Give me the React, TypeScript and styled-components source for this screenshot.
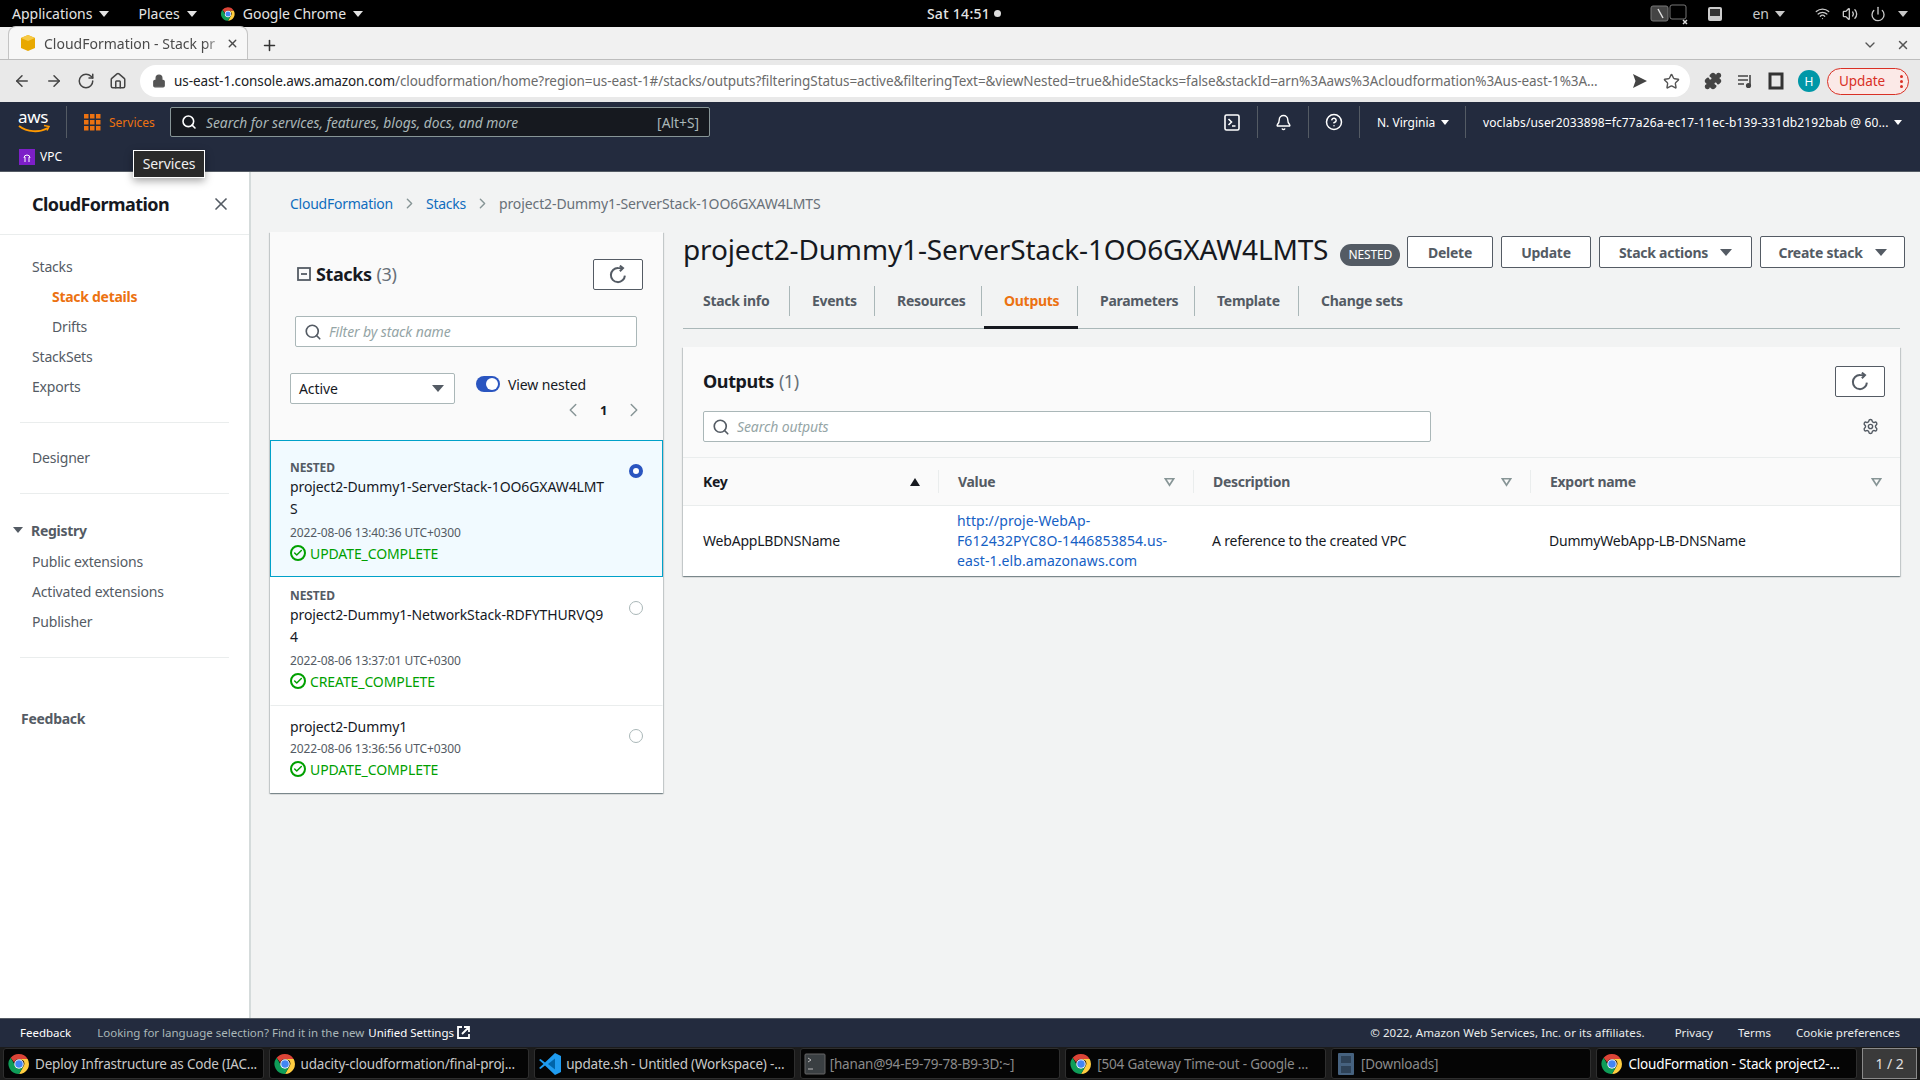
import React, { FC } from 'react';
import styled, { createGlobalStyle } from 'styled-components';
import {
  ArrowLeft,
  ArrowRight,
  RotateCw,
  Home,
  Lock,
  Star,
  Puzzle,
  Plus,
  X,
  ChevronDown,
  ChevronLeft,
  ChevronRight,
  Search,
  Bell,
  CircleHelp,
  Settings,
  Wifi,
  Volume2,
  Power,
  Check,
} from 'lucide-react';

const FONT = `"Noto Sans", "Open Sans", sans-serif`;

const GlobalStyle = createGlobalStyle`
  html, body { margin: 0; padding: 0; background: #f2f3f3; }
  body { font-family: ${FONT}; font-size: 14px; color: #16191f; letter-spacing: -0.1px; }
  * { box-sizing: border-box; }
`;

const Page = styled.div`
  width: 1920px;
  height: 1080px;
  display: flex;
  flex-direction: column;
  overflow: hidden;
  position: relative;
`;

/* gnome top bar */
const SystemBar = styled.div`
  height: 27px;
  background: #000;
  color: #e4e4e4;
  display: grid;
  grid-template-columns: 1fr auto 1fr;
  align-items: center;
  font-size: 14px;
  letter-spacing: 0;
  padding: 0 12px;
`;
const SystemLeft = styled.div`
  display: flex;
  align-items: center;
`;
const SystemRight = styled.div`
  display: flex;
  align-items: center;
  justify-content: flex-end;
  color: #c8c8c8;
`;
const SystemMenu = styled.span<{ $gap: number }>`
  display: flex;
  align-items: center;
  gap: 7px;
  margin-right: ${(p) => p.$gap}px;
`;
const Caret = styled.i<{ $size?: number; $color?: string }>`
  display: inline-block;
  width: 0;
  height: 0;
  flex-shrink: 0;
  border-left: ${(p) => p.$size ?? 5}px solid transparent;
  border-right: ${(p) => p.$size ?? 5}px solid transparent;
  border-top: ${(p) => (p.$size ?? 5) + 1}px solid ${(p) => p.$color ?? 'currentColor'};
`;
const Clock = styled.div`
  display: flex;
  align-items: center;
  gap: 4px;
  font-weight: 500;
  letter-spacing: 0.3px;
  margin-left: 8px;
`;
const ClockDot = styled.i`
  width: 7px;
  height: 7px;
  border-radius: 50%;
  background: #ddd;
`;
const TraySlot = styled.span<{ $ml?: number; $gap?: number }>`
  display: flex;
  align-items: center;
  gap: ${(p) => p.$gap ?? 6}px;
  margin-left: ${(p) => p.$ml ?? 0}px;
`;

/* chrome tabs */
const TabStrip = styled.div`
  height: 33px;
  background: #f1f1f1;
  border-bottom: 1px solid #bdbdbd;
  display: flex;
  align-items: flex-end;
  padding-left: 8px;
  color: #444;
`;
const BrowserTab = styled.div`
  width: 240px;
  height: 33px;
  background: #f7f7f7;
  border: 1px solid #c4c4c4;
  border-bottom: 0;
  border-radius: 8px 8px 0 0;
  display: flex;
  align-items: center;
  padding: 0 8px 0 11px;
  font-size: 14px;
  letter-spacing: 0;
  color: #4a4a4a;
`;
const BrowserTabTitle = styled.span`
  flex: 1;
  margin-left: 8px;
  white-space: nowrap;
  -webkit-mask-image: linear-gradient(90deg, #000 88%, transparent);
`;
const NewTab = styled.span`
  display: flex;
  margin: 0 0 5px 13px;
  color: #333;
`;
const TabStripEnd = styled.div`
  margin-left: auto;
  display: flex;
  align-items: center;
  gap: 18px;
  padding: 0 10px 6px 0;
  color: #555;
`;

/* address bar */
const AddressBar = styled.div`
  height: 42px;
  background: #e9e9e9;
  display: flex;
  align-items: center;
  padding-left: 13px;
  color: #444;
`;
const NavIcons = styled.div`
  display: flex;
  gap: 14px;
  width: 127px;
`;
const Omnibox = styled.div`
  width: 1550px;
  height: 32px;
  background: #fff;
  border-radius: 16px;
  display: flex;
  align-items: center;
  padding: 0 10px 0 12px;
  color: #555;
`;
const UrlText = styled.div`
  flex: 1;
  margin-left: 8px;
  font-size: 13.5px;
  letter-spacing: -0.08px;
  color: #6b6b6b;
  white-space: nowrap;
  b {
    font-weight: 400;
    color: #202124;
  }
`;
const OmniEnd = styled.div`
  display: flex;
  align-items: center;
  gap: 15px;
`;
const BrowserTools = styled.div`
  display: flex;
  align-items: center;
  margin-left: 14px;
  gap: 14px;
`;
const Avatar = styled.span`
  width: 22px;
  height: 22px;
  border-radius: 50%;
  background: #0097a7;
  color: #fff;
  font-size: 12px;
  display: flex;
  align-items: center;
  justify-content: center;
`;
const UpdatePill = styled.span`
  width: 82px;
  height: 27px;
  margin-left: 7px;
  border: 1px solid #d93025;
  border-radius: 14px;
  background: #fbe9e7;
  color: #d93025;
  font-size: 13.5px;
  display: flex;
  align-items: center;
  justify-content: space-between;
  padding: 0 5px 0 11px;
`;
const Dots = styled.span`
  display: flex;
  flex-direction: column;
  gap: 2px;
  i {
    width: 3px;
    height: 3px;
    border-radius: 50%;
    background: #d93025;
  }
`;

/* aws header */
const ConsoleHeader = styled.header`
  height: 70px;
  background: #232b3e;
  color: #fff;
  border-bottom: 1px solid #545b64;
  font-size: 12px;
  letter-spacing: 0;
`;
const HeaderRow = styled.div`
  height: 40px;
  display: flex;
  align-items: center;
  padding-left: 18px;
`;
const LogoBox = styled.div`
  width: 33px;
  height: 26px;
  position: relative;
  font-size: 17px;
  line-height: 15px;
  letter-spacing: -0.3px;
  color: #fff;
  svg {
    position: absolute;
    left: 0;
    top: 15px;
  }
`;
const HeaderSep = styled.span<{ $h?: number; $ml?: number; $mr?: number }>`
  width: 1px;
  height: ${(p) => p.$h ?? 22}px;
  background: #545b64;
  margin-left: ${(p) => p.$ml ?? 0}px;
  margin-right: ${(p) => p.$mr ?? 0}px;
`;
const ServicesLink = styled.span`
  display: flex;
  align-items: center;
  gap: 8px;
  color: #ec7211;
  width: 86px;
`;
const HeaderSearch = styled.div`
  width: 540px;
  height: 30px;
  background: #16191f;
  border: 1px solid #879596;
  border-radius: 2px;
  display: flex;
  align-items: center;
  padding: 0 10px;
  gap: 9px;
  color: #aab7b8;
  font-size: 13.8px;
  em {
    flex: 1;
  }
`;
const HeaderRight = styled.div`
  margin-left: auto;
  display: flex;
  align-items: center;
  padding-right: 17px;
`;
const HeaderIcon = styled.span`
  width: 50px;
  display: flex;
  justify-content: center;
`;
const HeaderMenu = styled.span<{ $w: number; $between?: boolean }>`
  display: flex;
  align-items: center;
  justify-content: ${(p) => (p.$between ? 'space-between' : 'flex-start')};
  gap: 6px;
  width: ${(p) => p.$w}px;
  padding: 0 2px 0 17px;
  white-space: nowrap;
  letter-spacing: ${(p) => (p.$between ? 0.12 : 0)}px;
`;
const FavRow = styled.div`
  height: 29px;
  display: flex;
  align-items: center;
  padding-left: 19px;
  gap: 5px;
  font-size: 12px;
`;
const VpcIcon = styled.span`
  width: 16px;
  height: 16px;
  background: #7d1fc8;
  display: flex;
  align-items: center;
  justify-content: center;
`;
const Tooltip = styled.div`
  position: absolute;
  left: 133px;
  top: 150px;
  width: 72px;
  height: 28px;
  background: #2a2a2a;
  color: #f0f0f0;
  border: 1px solid #fff;
  font-size: 14px;
  line-height: 26px;
  text-align: center;
  box-shadow: 0 3px 8px rgba(0, 0, 0, 0.35);
  z-index: 4;
`;

/* body */
const Body = styled.div`
  flex: 1;
  display: flex;
  min-height: 0;
`;
const Sidebar = styled.aside`
  width: 251px;
  background: #fff;
  border-right: 2px solid #d5dbdb;
  flex-shrink: 0;
`;
const SidebarHead = styled.div`
  height: 63px;
  border-bottom: 1px solid #eaeded;
  display: flex;
  align-items: center;
  justify-content: space-between;
  padding: 2px 18px 0 32px;
  font-size: 18px;
  font-weight: 700;
  letter-spacing: -0.55px;
`;
const SideList = styled.div<{ $top?: number }>`
  padding-top: ${(p) => p.$top ?? 0}px;
`;
const SideItem = styled.div<{ $indent?: boolean; $active?: boolean }>`
  height: 30px;
  line-height: 30px;
  padding-left: ${(p) => (p.$indent ? 52 : 32)}px;
  font-size: 14px;
  letter-spacing: ${(p) => (p.$active ? -0.28 : -0.18)}px;
  color: ${(p) => (p.$active ? '#ec7211' : '#545b64')};
  font-weight: ${(p) => (p.$active ? 700 : 400)};
`;
const SideDivider = styled.div`
  height: 1px;
  background: #eaeded;
  margin: 20px 20px;
`;
const SideGroup = styled.div`
  display: flex;
  align-items: center;
  height: 30px;
  margin: 21px 0 2px;
  padding-left: 13px;
  gap: 8px;
  color: #545b64;
  font-weight: 700;
  font-size: 14px;
  letter-spacing: -0.28px;
`;
const SideFeedback = styled.div`
  margin: 46px 0 0 21px;
  height: 30px;
  line-height: 30px;
  font-weight: 700;
  letter-spacing: -0.28px;
  color: #545b64;
`;

const Main = styled.main`
  flex: 1;
  padding: 0 20px 0 19px;
  min-width: 0;
`;
const Crumbs = styled.nav`
  height: 60px;
  display: flex;
  align-items: center;
  padding: 2px 0 0 20px;
  gap: 8px;
  font-size: 14px;
  color: #687078;
`;
const CrumbLink = styled.a`
  color: #0f6dbe;
  letter-spacing: -0.25px;
`;
const Columns = styled.div`
  display: flex;
  gap: 20px;
  align-items: flex-start;
`;

const Card = styled.section`
  background: #fafafa;
  box-shadow: 0 1px 1px 0 rgba(0, 28, 36, 0.3), 1px 1px 1px 0 rgba(0, 28, 36, 0.15),
    -1px 1px 1px 0 rgba(0, 28, 36, 0.15);
`;
const StacksCard = styled(Card)`
  width: 393px;
  flex-shrink: 0;
`;
const StacksHead = styled.div`
  padding: 27px 20px 0 27px;
  display: flex;
  align-items: center;
  justify-content: space-between;
`;
const PanelTitle = styled.h2`
  margin: -2px 0 0;
  font-size: 18px;
  font-weight: 700;
  letter-spacing: -0.4px;
  display: flex;
  align-items: center;
  gap: 5px;
  span {
    font-weight: 400;
    color: #687078;
  }
`;
const IconButton = styled.button`
  width: 50px;
  height: 31px;
  background: #fff;
  border: 1px solid #545b64;
  border-radius: 2px;
  padding: 0;
  display: flex;
  align-items: center;
  justify-content: center;
  color: #545b64;
`;
const InputBox = styled.div<{ $w: number; $ml: number }>`
  width: ${(p) => p.$w}px;
  height: 31px;
  margin-left: ${(p) => p.$ml}px;
  background: #fff;
  border: 1px solid #aab7b8;
  border-radius: 2px;
  display: flex;
  align-items: center;
  padding: 0 8px 0 8px;
  gap: 7px;
  font-size: 14px;
  font-style: italic;
  color: #95a5a6;
  svg {
    color: #545b64;
  }
`;
const FilterSlot = styled.div`
  margin-top: 26px;
`;
const ControlRow = styled.div`
  display: flex;
  padding: 26px 0 18px 20px;
`;
const SelectBox = styled.div`
  width: 165px;
  height: 31px;
  background: #fff;
  border: 1px solid #aab7b8;
  border-radius: 2px;
  display: flex;
  align-items: center;
  justify-content: space-between;
  padding: 0 10px 0 8px;
  font-size: 14px;
  color: #16191f;
`;
const ToggleCol = styled.div`
  margin-left: 21px;
  flex: 1;
`;
const ToggleRow = styled.div`
  height: 22px;
  display: flex;
  align-items: center;
  gap: 8px;
  font-size: 14px;
  color: #16191f;
`;
const Toggle = styled.span`
  width: 24px;
  height: 16px;
  background: #2a55c0;
  border-radius: 8px;
  display: flex;
  align-items: center;
  justify-content: flex-end;
  padding-right: 2px;
  i {
    width: 12px;
    height: 12px;
    border-radius: 50%;
    background: #fff;
  }
`;
const Pager = styled.div`
  height: 24px;
  margin-top: 3px;
  display: flex;
  align-items: center;
  padding-left: 86px;
  font-size: 13px;
  font-weight: 700;
  gap: 16px;
  svg {
    color: #879596;
  }
`;
const StackItem = styled.div<{ $selected?: boolean; $top: number; $bottom: number }>`
  display: flex;
  justify-content: space-between;
  background: ${(p) => (p.$selected ? '#f1faff' : '#fff')};
  border: 1px solid ${(p) => (p.$selected ? '#00a1c9' : 'transparent')};
  border-bottom-color: ${(p) => (p.$selected ? '#00a1c9' : '#eaeded')};
  padding: ${(p) => p.$top}px 19px ${(p) => p.$bottom}px 19px;
  &:last-child {
    border-bottom-color: transparent;
  }
`;
const StackBody = styled.div`
  width: 320px;
`;
const NestedTag = styled.div`
  font-size: 12px;
  line-height: 16px;
  font-weight: 700;
  color: #545b64;
`;
const StackName = styled.div`
  font-size: 14px;
  line-height: 22px;
  color: #16191f;
  word-break: break-all;
`;
const StackDate = styled.div<{ $tight?: boolean }>`
  font-size: 12px;
  line-height: 20px;
  margin-top: ${(p) => (p.$tight ? 1 : 3)}px;
  color: #545b64;
`;
const StackStatus = styled.div`
  display: flex;
  align-items: center;
  gap: 4px;
  height: 20px;
  color: #00a000;
  font-size: 14px;
`;
const StatusIcon = styled.span`
  width: 16px;
  height: 16px;
  border: 2px solid #00a000;
  border-radius: 50%;
  display: flex;
  align-items: center;
  justify-content: center;
`;
const Radio = styled.span<{ $on?: boolean; $top: number }>`
  width: 14px;
  height: 14px;
  margin-top: ${(p) => p.$top}px;
  border-radius: 50%;
  background: #fff;
  border: ${(p) => (p.$on ? '4px solid #2a55c0' : '1px solid #aab7b8')};
  flex-shrink: 0;
`;

const DetailCol = styled.div`
  flex: 1;
  min-width: 0;
`;
const TitleRow = styled.div`
  height: 54px;
  display: flex;
  align-items: flex-start;
  margin-right: -5px;
`;
const StackTitle = styled.h1`
  margin: 0;
  font-size: 28px;
  line-height: 34px;
  font-weight: 400;
  letter-spacing: -0.15px;
  white-space: nowrap;
`;
const Badge = styled.span`
  width: 60px;
  height: 22px;
  margin: 12px 0 0 12px;
  background: #545b64;
  color: #fff;
  border-radius: 11px;
  font-size: 12px;
  line-height: 22px;
  text-align: center;
`;
const Actions = styled.div`
  margin: 4px 0 0 auto;
  display: flex;
  gap: 8px;
`;
const ActionButton = styled.button<{ $w: number }>`
  width: ${(p) => p.$w}px;
  height: 32px;
  background: #fff;
  border: 1px solid #545b64;
  border-radius: 2px;
  color: #545b64;
  font: 700 14px ${FONT};
  letter-spacing: -0.25px;
  display: flex;
  align-items: center;
  justify-content: center;
  gap: 12px;
  padding: 0;
`;
const Tabs = styled.div`
  height: 43px;
  border-bottom: 1px solid #aab7b8;
  display: flex;
  align-items: flex-start;
`;
const TabItem = styled.div<{ $w: number; $active?: boolean; $last?: boolean }>`
  width: ${(p) => p.$w}px;
  height: 30px;
  line-height: 30px;
  padding-left: 22px;
  white-space: nowrap;
  font-size: 14px;
  font-weight: 700;
  letter-spacing: -0.28px;
  color: ${(p) => (p.$active ? '#ec7211' : '#545b64')};
  border-right: ${(p) => (p.$last ? '0' : '1px solid #aab7b8')};
  position: relative;
  &:first-child {
    padding-left: 20px;
  }
  &::after {
    content: '';
    display: ${(p) => (p.$active ? 'block' : 'none')};
    position: absolute;
    left: 2px;
    right: -1px;
    top: 40px;
    height: 3px;
    background: #16191f;
  }
`;
const OutputsCard = styled(Card)`
  margin-top: 18px;
`;
const OutputsHead = styled.div`
  padding: 19px 15px 0 20px;
  display: flex;
  align-items: center;
  justify-content: space-between;
`;
const SearchRow = styled.div`
  display: flex;
  align-items: center;
  justify-content: space-between;
  margin-top: 14px;
  padding: 0 21px 15px 0;
  border-bottom: 1px solid #eaeded;
  color: #545b64;
`;
const OutputsGrid = styled.div`
  display: grid;
  grid-template-columns: 255px 255px 337px 370px;
`;
const HeadCell = styled.div<{ $first?: boolean }>`
  height: 48px;
  border-bottom: 1px solid #eaeded;
  display: flex;
  align-items: center;
  justify-content: space-between;
  padding: 0 18px 0 20px;
  font-weight: 700;
  font-size: 14px;
  letter-spacing: -0.3px;
  color: ${(p) => (p.$first ? '#16191f' : '#545b64')};
  position: relative;
  &::before {
    content: '';
    display: ${(p) => (p.$first ? 'none' : 'block')};
    position: absolute;
    left: 0;
    top: 12px;
    bottom: 12px;
    width: 1px;
    background: #eaeded;
  }
`;
const DataCell = styled.div<{ $pl: number }>`
  height: 70px;
  background: #fff;
  display: flex;
  align-items: center;
  padding-left: ${(p) => p.$pl}px;
  padding-right: 18px;
  font-size: 14px;
  line-height: 20px;
  letter-spacing: -0.2px;
  color: #16191f;
`;
const TableLink = styled.a`
  color: #1560c4;
  letter-spacing: 0.1px;
`;
const SortUp = styled.i`
  width: 0;
  height: 0;
  border-left: 5px solid transparent;
  border-right: 5px solid transparent;
  border-bottom: 8px solid #16191f;
`;

/* footer + window list */
const ConsoleFooter = styled.footer`
  height: 29px;
  background: #232b3e;
  border-top: 1px solid #545b64;
  color: #fff;
  font-size: 11.5px;
  letter-spacing: 0;
  display: flex;
  align-items: center;
  padding: 0 20px 2px;
`;
const FooterHint = styled.span`
  margin-left: 26px;
  color: #aab7b8;
  display: flex;
  align-items: center;
  b {
    font-weight: 400;
    color: #fff;
    margin-left: 4px;
  }
  svg {
    margin-left: 2px;
  }
`;
const FooterEnd = styled.div`
  margin-left: auto;
  display: flex;
  gap: 25px;
  color: #eaeded;
`;
const Copyright = styled.span`
  margin-right: 5px;
  letter-spacing: 0.07px;
`;
const WindowList = styled.div`
  height: 33px;
  background: #1c1c1c;
  display: flex;
  align-items: center;
  padding: 0 3px;
  gap: 5px;
`;
const WindowButton = styled.div<{ $active?: boolean; $dim?: boolean }>`
  flex: 1;
  min-width: 0;
  height: 31px;
  background: #050505;
  border-radius: 3px;
  box-shadow: inset 0 0 0 1px #2e2e2e;
  display: flex;
  align-items: center;
  gap: 4px;
  padding: 0 4px;
  font-size: 13.5px;
  letter-spacing: -0.2px;
  white-space: nowrap;
  color: ${(p) => (p.$active ? '#fff' : p.$dim ? '#8a8a8a' : '#c8c8c8')};
`;
const WorkspacePager = styled.div`
  width: 55px;
  height: 31px;
  background: #3a3a3a;
  border: 1px solid #8a8a8a;
  color: #e0e0e0;
  font-size: 14px;
  display: flex;
  align-items: center;
  justify-content: center;
  flex-shrink: 0;
`;

const ChromeLogo: FC<{ size?: number }> = ({ size = 24 }) => (
  <svg width={size} height={size} viewBox="0 0 48 48" style={{ flexShrink: 0 }}>
    <path fill="#db4437" d="M24 4a20 20 0 0 1 17.3 10H24a10 10 0 0 0-9.6 7.2L7.3 11.6A20 20 0 0 1 24 4z" />
    <path fill="#ffcd40" d="M41.3 14A20 20 0 0 1 24 44l8.7-15A10 10 0 0 0 32 16.5l-8-2.5z" />
    <path fill="#0f9d58" d="M7.3 11.6l8.6 14.9A10 10 0 0 0 32.7 29L24 44A20 20 0 0 1 7.3 11.6z" />
    <circle cx="24" cy="24" r="9.5" fill="#fff" />
    <circle cx="24" cy="24" r="7.5" fill="#4285f4" />
  </svg>
);

const VsCodeLogo = () => (
  <svg width="24" height="24" viewBox="0 0 24 24" style={{ flexShrink: 0 }}>
    <path fill="#1f9cf0" d="M17 1l6 3v16l-6 3-10-9.5L2.5 17 1 16l4.5-4L1 8l1.5-1L7 10.500z" />
    <path fill="#0065a9" d="M17 6.500L10 12l7 5.500z" />
  </svg>
);

const RefreshIcon = () => (
  <svg width="20" height="20" viewBox="0 0 16 16" fill="none" stroke="currentColor" strokeWidth="1.600">
    <path d="M13.500 8.500A5.600 5.600 0 1 1 8 2.500h4" />
    <path d="M9.500 0.500L12 2.500 9.500 5" />
  </svg>
);

const TerminalIcon = () => (
  <svg width="16" height="17" viewBox="0 0 16 17" fill="none" stroke="#fff" strokeWidth="1.600">
    <rect x="1" y="1" width="14" height="15" rx="1.500" />
    <path d="M4.500 5l3 3-3 3M8 12h3.500" />
  </svg>
);

const FilterDown = () => (
  <svg width="11" height="10" viewBox="0 0 12 10" fill="none" stroke="#879596" strokeWidth="1.800">
    <path d="M1.500 1.500h9L6 8.500z" />
  </svg>
);

const StatusLine: FC<{ text: string }> = ({ text }) => (
  <StackStatus>
    <StatusIcon>
      <Check size={10} strokeWidth={3.5} />
    </StatusIcon>
    {text}
  </StackStatus>
);

const tabs = [
  { label: 'Stack info', w: 107 },
  { label: 'Events', w: 85 },
  { label: 'Resources', w: 107 },
  { label: 'Outputs', w: 96, active: true },
  { label: 'Parameters', w: 117 },
  { label: 'Template', w: 104 },
  { label: 'Change sets', w: 130, last: true },
];

const App: FC = () => (
  <Page>
    <GlobalStyle />
    <SystemBar>
      <SystemLeft>
        <SystemMenu $gap={29}>Applications <Caret /></SystemMenu>
        <SystemMenu $gap={23}>Places <Caret /></SystemMenu>
        <SystemMenu $gap={0}><ChromeLogo size={16} /> Google Chrome <Caret /></SystemMenu>
      </SystemLeft>
      <Clock>Sat 14:51 <ClockDot /></Clock>
      <SystemRight>
        <svg width="40" height="22" viewBox="0 0 40 22" fill="none" stroke="#777">
          <rect x="1" y="3" width="17" height="15" rx="2" fill="#444" />
          <rect x="20" y="2" width="16" height="14" rx="2" />
          <path d="M8 6l5 9M33 17l4 4M37 17l-4 4" stroke="#ddd" strokeWidth="1.500" />
        </svg>
        <TraySlot $ml={17}>
          <svg width="16" height="16" viewBox="0 0 16 16"><rect x="1" y="1" width="14" height="14" rx="2" fill="#ccc" /><rect x="3" y="3" width="10" height="7" fill="#333" /></svg>
        </TraySlot>
        <TraySlot $ml={29}>en <Caret /></TraySlot>
        <TraySlot $ml={30} $gap={12}>
          <Wifi size={15} />
          <Volume2 size={16} />
          <Power size={16} />
          <Caret />
        </TraySlot>
      </SystemRight>
    </SystemBar>

    <TabStrip>
      <BrowserTab>
        <svg width="16" height="18" viewBox="0 0 16 18">
          <path fill="#e8a800" d="M8 1l7 3v10l-7 3-7-3V4z" />
          <path fill="#f6c945" d="M8 1l7 3-7 3-7-3z" />
        </svg>
        <BrowserTabTitle>CloudFormation - Stack pr</BrowserTabTitle>
        <X size={13} strokeWidth={2.5} />
      </BrowserTab>
      <NewTab><Plus size={17} strokeWidth={2.2} /></NewTab>
      <TabStripEnd>
        <ChevronDown size={16} />
        <X size={14} strokeWidth={2.5} />
      </TabStripEnd>
    </TabStrip>

    <AddressBar>
      <NavIcons>
        <ArrowLeft size={18} />
        <ArrowRight size={18} />
        <RotateCw size={18} />
        <Home size={18} />
      </NavIcons>
      <Omnibox>
        <Lock size={14} fill="#555" />
        <UrlText>
          <b>us-east-1.console.aws.amazon.com</b>/cloudformation/home?region=us-east-1#/stacks/outputs?filteringStatus=active&filteringText=&viewNested=true&hideStacks=false&stackId=arn%3Aaws%3Acloudformation%3Aus-east-1%3A...
        </UrlText>
        <OmniEnd>
          <svg width="16" height="16" viewBox="0 0 16 16"><path fill="#444" d="M1 1l14 7-14 7 2.500-7z" /></svg>
          <Star size={17} />
        </OmniEnd>
      </Omnibox>
      <BrowserTools>
        <Puzzle size={18} fill="#444" />
        <svg width="18" height="18" viewBox="0 0 18 18" fill="none" stroke="#444" strokeWidth="1.600"><path d="M2 4h10M2 8h10M2 12h6" /><path d="M14 3v10" /><circle cx="12.500" cy="13.500" r="1.800" fill="#444" /></svg>
        <svg width="16" height="18" viewBox="0 0 16 18" fill="none" stroke="#333" strokeWidth="3"><rect x="2" y="2" width="12" height="14" /></svg>
        <Avatar>H</Avatar>
      </BrowserTools>
      <UpdatePill>
        Update
        <Dots><i /><i /><i /></Dots>
      </UpdatePill>
    </AddressBar>

    <ConsoleHeader>
      <HeaderRow>
        <LogoBox>
          aws
          <svg width="33" height="10" viewBox="0 0 33 10" fill="none" stroke="#ff9900" strokeWidth="2">
            <path d="M1 2c8 6 20 7 29 2" />
            <path d="M26 1.500l5 1-2 4" strokeWidth="1.500" />
          </svg>
        </LogoBox>
        <HeaderSep $h={32} $ml={15} $mr={17} />
        <ServicesLink>
          <svg width="17" height="17" viewBox="0 0 17 17" fill="#ec7211">
            {[0, 6, 12].map((x) =>
              [0, 6, 12].map((y) => <rect key={`${x}-${y}`} x={x} y={y} width="4.500" height="4.500" />)
            )}
          </svg>
          Services
        </ServicesLink>
        <HeaderSearch>
          <Search size={16} color="#fff" strokeWidth={2.4} />
          <em>Search for services, features, blogs, docs, and more</em>
          <span>[Alt+S]</span>
        </HeaderSearch>
        <HeaderRight>
          <HeaderIcon><TerminalIcon /></HeaderIcon>
          <HeaderSep $h={32} />
          <HeaderIcon><Bell size={17} strokeWidth={2} /></HeaderIcon>
          <HeaderSep $h={32} />
          <HeaderIcon><CircleHelp size={18} strokeWidth={2} /></HeaderIcon>
          <HeaderSep $h={32} />
          <HeaderMenu $w={105}>N. Virginia <Caret $size={4} /></HeaderMenu>
          <HeaderSep $h={32} />
          <HeaderMenu $w={437} $between>voclabs/user2033898=fc77a26a-ec17-11ec-b139-331db2192bab @ 60... <Caret $size={4} /></HeaderMenu>
        </HeaderRight>
      </HeaderRow>
      <FavRow>
        <VpcIcon>
          <svg width="10" height="12" viewBox="0 0 10 12" fill="none" stroke="#fff"><path d="M2 7a3 3 0 1 1 6 0M3 6v5M7 6v5" /></svg>
        </VpcIcon>
        VPC
      </FavRow>
    </ConsoleHeader>
    <Tooltip>Services</Tooltip>

    <Body>
      <Sidebar>
        <SidebarHead>
          CloudFormation
          <X size={20} color="#545b64" />
        </SidebarHead>
        <SideList $top={17}>
          <SideItem>Stacks</SideItem>
          <SideItem $indent $active>Stack details</SideItem>
          <SideItem $indent>Drifts</SideItem>
          <SideItem>StackSets</SideItem>
          <SideItem>Exports</SideItem>
        </SideList>
        <SideDivider />
        <SideItem>Designer</SideItem>
        <SideDivider />
        <SideGroup><Caret $size={5} $color="#545b64" /> Registry</SideGroup>
        <SideItem>Public extensions</SideItem>
        <SideItem>Activated extensions</SideItem>
        <SideItem>Publisher</SideItem>
        <SideDivider />
        <SideFeedback>Feedback</SideFeedback>
      </Sidebar>

      <Main>
        <Crumbs>
          <CrumbLink>CloudFormation</CrumbLink>
          <ChevronRight size={17} color="#879596" />
          <CrumbLink>Stacks</CrumbLink>
          <ChevronRight size={17} color="#879596" />
          project2-Dummy1-ServerStack-1OO6GXAW4LMTS
        </Crumbs>
        <Columns>
          <StacksCard>
            <StacksHead>
              <PanelTitle>
                <svg width="14" height="14" viewBox="0 0 14 14" fill="none" stroke="#545b64" strokeWidth="1.800"><rect x="1" y="1" width="12" height="12" /><path d="M4 7h6" /></svg>
                Stacks <span>(3)</span>
              </PanelTitle>
              <IconButton><RefreshIcon /></IconButton>
            </StacksHead>
            <FilterSlot>
              <InputBox $w={342} $ml={25}>
                <Search size={18} strokeWidth={2.2} />
                Filter by stack name
              </InputBox>
            </FilterSlot>
            <ControlRow>
              <SelectBox>
                Active
                <Caret $size={6} $color="#545b64" />
              </SelectBox>
              <ToggleCol>
                <ToggleRow><Toggle><i /></Toggle> View nested</ToggleRow>
                <Pager>
                  <ChevronLeft size={22} strokeWidth={1.6} />
                  1
                  <ChevronRight size={22} strokeWidth={1.6} />
                </Pager>
              </ToggleCol>
            </ControlRow>
            <StackItem $selected $top={19} $bottom={13}>
              <StackBody>
                <NestedTag>NESTED</NestedTag>
                <StackName>project2-Dummy1-ServerStack-1OO6GXAW4LMTS</StackName>
                <StackDate>2022-08-06 13:40:36 UTC+0300</StackDate>
                <StatusLine text="UPDATE_COMPLETE" />
              </StackBody>
              <Radio $on $top={4} />
            </StackItem>
            <StackItem $top={10} $bottom={14}>
              <StackBody>
                <NestedTag>NESTED</NestedTag>
                <StackName>project2-Dummy1-NetworkStack-RDFYTHURVQ94</StackName>
                <StackDate>2022-08-06 13:37:01 UTC+0300</StackDate>
                <StatusLine text="CREATE_COMPLETE" />
              </StackBody>
              <Radio $top={13} />
            </StackItem>
            <StackItem $top={9} $bottom={13}>
              <StackBody>
                <StackName>project2-Dummy1</StackName>
                <StackDate $tight>2022-08-06 13:36:56 UTC+0300</StackDate>
                <StatusLine text="UPDATE_COMPLETE" />
              </StackBody>
              <Radio $top={13} />
            </StackItem>
          </StacksCard>

          <DetailCol>
            <TitleRow>
              <StackTitle>project2-Dummy1-ServerStack-1OO6GXAW4LMTS</StackTitle>
              <Badge>NESTED</Badge>
              <Actions>
                <ActionButton $w={86}>Delete</ActionButton>
                <ActionButton $w={90}>Update</ActionButton>
                <ActionButton $w={153}>Stack actions <Caret $size={6} /></ActionButton>
                <ActionButton $w={145}>Create stack <Caret $size={6} /></ActionButton>
              </Actions>
            </TitleRow>
            <Tabs>
              {tabs.map((t) => (
                <TabItem key={t.label} $w={t.w} $active={t.active} $last={t.last}>{t.label}</TabItem>
              ))}
            </Tabs>
            <OutputsCard>
              <OutputsHead>
                <PanelTitle>Outputs <span>(1)</span></PanelTitle>
                <IconButton><RefreshIcon /></IconButton>
              </OutputsHead>
              <SearchRow>
                <InputBox $w={728} $ml={20}>
                  <Search size={18} strokeWidth={2.2} />
                  Search outputs
                </InputBox>
                <Settings size={17} />
              </SearchRow>
              <OutputsGrid>
                <HeadCell $first>Key <SortUp /></HeadCell>
                <HeadCell>Value <FilterDown /></HeadCell>
                <HeadCell>Description <FilterDown /></HeadCell>
                <HeadCell>Export name <FilterDown /></HeadCell>
                <DataCell $pl={20}>WebAppLBDNSName</DataCell>
                <DataCell $pl={19}>
                  <TableLink>http://proje-WebAp-F612432PYC8O-1446853854.us-east-1.elb.amazonaws.com</TableLink>
                </DataCell>
                <DataCell $pl={19}>A reference to the created VPC</DataCell>
                <DataCell $pl={19}>DummyWebApp-LB-DNSName</DataCell>
              </OutputsGrid>
            </OutputsCard>
          </DetailCol>
        </Columns>
      </Main>
    </Body>

    <ConsoleFooter>
      Feedback
      <FooterHint>
        Looking for language selection? Find it in the new <b>Unified Settings</b>
        <svg width="15" height="15" viewBox="0 0 15 15" fill="none" stroke="#fff" strokeWidth="1.800"><path d="M6 2H2v11h11V9M8 2h5v5M13 2L6 9" /></svg>
      </FooterHint>
      <FooterEnd>
        <Copyright>© 2022, Amazon Web Services, Inc. or its affiliates.</Copyright>
        <span>Privacy</span>
        <span>Terms</span>
        <span>Cookie preferences</span>
      </FooterEnd>
    </ConsoleFooter>
    <WindowList>
      <WindowButton><ChromeLogo />Deploy Infrastructure as Code (IAC...</WindowButton>
      <WindowButton><ChromeLogo />udacity-cloudformation/final-proj...</WindowButton>
      <WindowButton><VsCodeLogo />update.sh - Untitled (Workspace) -...</WindowButton>
      <WindowButton $dim>
        <svg width="22" height="22" viewBox="0 0 22 22"><rect x="1" y="1" width="20" height="20" rx="1" fill="#3a3f42" stroke="#666" /><path d="M4 5l3 2-3 2M4 16h5" stroke="#bbb" fill="none" /></svg>
        [hanan@94-E9-79-78-B9-3D:~]
      </WindowButton>
      <WindowButton $dim><ChromeLogo />[504 Gateway Time-out - Google ...</WindowButton>
      <WindowButton $dim>
        <svg width="22" height="24" viewBox="0 0 22 24"><rect x="3" y="1" width="16" height="22" rx="1" fill="#46627f" /><rect x="6" y="4" width="10" height="7" fill="#2e4257" /><rect x="6" y="14" width="10" height="7" fill="#2e4257" /></svg>
        [Downloads]
      </WindowButton>
      <WindowButton $active><ChromeLogo />CloudFormation - Stack project2-...</WindowButton>
      <WorkspacePager>1 / 2</WorkspacePager>
    </WindowList>
  </Page>
);

export default App;
